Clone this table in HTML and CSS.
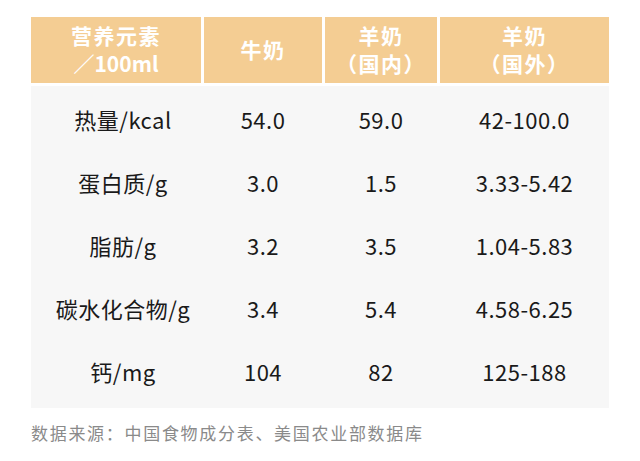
FILE: index.html
```html
<!DOCTYPE html>
<html lang="zh">
<head>
<meta charset="utf-8">
<link rel="stylesheet" href="styles.css">
</head>
<body>
<div class="page">
  <div class="table">
    <div class="thead">
      <div class="th"><span>营养元素</span><span class="latin">／100ml</span></div>
      <div class="th"><span>牛奶</span></div>
      <div class="th"><span>羊奶</span><span>（国内）</span></div>
      <div class="th"><span>羊奶</span><span>（国外）</span></div>
    </div>
    <div class="tbody">
      <div class="tr"><div class="td first">热量/kcal</div><div class="td">54.0</div><div class="td">59.0</div><div class="td">42-100.0</div></div>
      <div class="tr"><div class="td first">蛋白质/g</div><div class="td">3.0</div><div class="td">1.5</div><div class="td">3.33-5.42</div></div>
      <div class="tr"><div class="td first">脂肪/g</div><div class="td">3.2</div><div class="td">3.5</div><div class="td">1.04-5.83</div></div>
      <div class="tr"><div class="td first">碳水化合物/g</div><div class="td">3.4</div><div class="td">5.4</div><div class="td">4.58-6.25</div></div>
      <div class="tr"><div class="td first">钙/mg</div><div class="td">104</div><div class="td">82</div><div class="td">125-188</div></div>
    </div>
  </div>
  <p class="source">数据来源：中国食物成分表、美国农业部数据库</p>
</div>
</body>
</html>
```
FILE: styles.css
```css
html, body {
  margin: 0;
  padding: 0;
  background: #ffffff;
}
.page {
  padding: 17px 31px 0 31px;
  font-family: "Noto Sans CJK SC", "Noto Sans", sans-serif;
}
.table {
  width: 578px;
}
.thead {
  display: grid;
  grid-template-columns: 170px 118px 112px 169px;
  column-gap: 3px;
  height: 66px;
  margin-bottom: 3px;
}
.th {
  background: #f4cd93;
  color: #ffffff;
  font-weight: 700;
  font-size: 21px;
  letter-spacing: 1.5px;
  line-height: 28.5px;
  display: flex;
  flex-direction: column;
  align-items: center;
  justify-content: center;
  padding-bottom: 2px;
  box-sizing: border-box;
}
.th .latin {
  letter-spacing: 0;
}
.tbody {
  background: #f7f7f7;
  padding: 1px 0 6px 0;
}
.tr {
  display: grid;
  grid-template-columns: 170px 118px 112px 169px;
  column-gap: 3px;
  height: 63px;
  align-items: center;
}
.td {
  text-align: center;
  font-size: 22px;
  color: #1a1a1a;
  letter-spacing: 0.5px;
}
.td.first {
  padding-left: 14px;
}
.source {
  margin: 13px 0 0 0;
  font-size: 17px;
  letter-spacing: 1.7px;
  color: #8a8a8a;
  line-height: 24px;
}
```
